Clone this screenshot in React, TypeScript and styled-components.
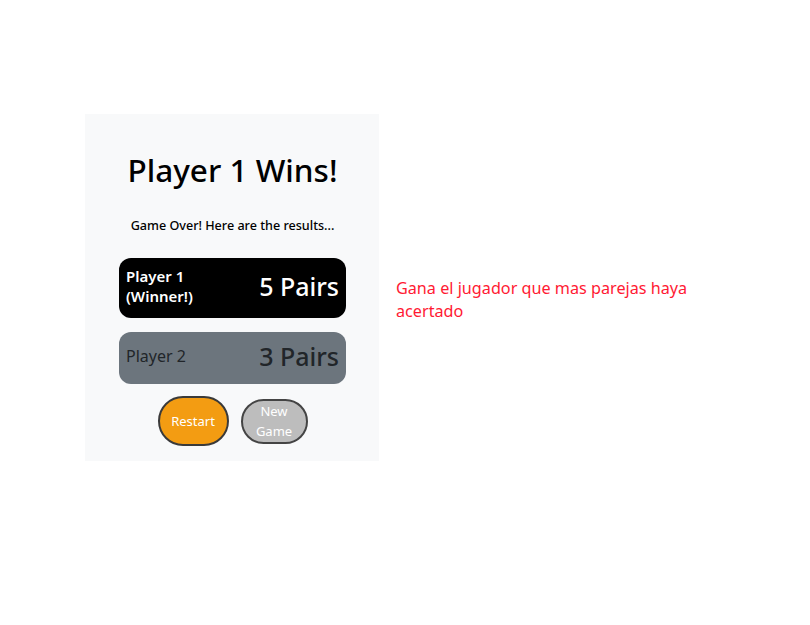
import React from 'react';
import styled, { createGlobalStyle } from 'styled-components';

const GlobalStyle = createGlobalStyle`
	html, body {
		margin: 0;
		padding: 0;
		background: #ffffff;
	}
	body {
		font-family: 'Noto Sans', 'Open Sans', sans-serif;
		color: #212529;
	}
`;

type Player = { name: string; pairs: number; winner?: boolean };

const players: Player[] = [
	{ name: 'Player 1', pairs: 5, winner: true },
	{ name: 'Player 2', pairs: 3 }
];

export default function App() {
	return (
		<>
			<GlobalStyle />
			<Page>
				<Card>
					<Title>Player 1 Wins!</Title>
					<Subtitle>Game Over! Here are the results...</Subtitle>
					<Results>
						{players.map(p => (
							<ResultRow key={p.name} winner={p.winner}>
								<PlayerName winner={p.winner}>
									{p.name}
									{p.winner ? (
										<>
											<br />
											(Winner!)
										</>
									) : null}
								</PlayerName>
								<Pairs>{p.pairs} Pairs</Pairs>
							</ResultRow>
						))}
					</Results>
					<Actions>
						<ActionButton variant="restart">Restart</ActionButton>
						<ActionButton variant="new">
							New
							<br />
							Game
						</ActionButton>
					</Actions>
				</Card>
				<Note>Gana el jugador que mas parejas haya acertado</Note>
			</Page>
		</>
	);
}

const Page = styled.div`
	display: flex;
	align-items: flex-start;
	gap: 17px;
	padding: 114px 0 0 85px;
`;

const Card = styled.div`
	width: 294px;
	box-sizing: border-box;
	background: #f8f9fa;
	padding: 30px 33px 15px 34px;
	display: flex;
	flex-direction: column;
	align-items: stretch;
`;

const Title = styled.h1`
	margin: 0;
	text-align: center;
	font-size: 31.5px;
	font-weight: 500;
	line-height: 52px;
	color: #000;
`;

const Subtitle = styled.p`
	margin: 22px 0 0;
	text-align: center;
	font-size: 12.6px;
	font-weight: 500;
	line-height: 16px;
	color: #000;
`;

const Results = styled.div`
	display: flex;
	flex-direction: column;
	gap: 14px;
	margin-top: 24px;
`;

const ResultRow = styled.div<{ winner?: boolean }>`
	display: flex;
	align-items: center;
	justify-content: space-between;
	height: ${({ winner }) => (winner ? '60px' : '52px')};
	box-sizing: border-box;
	padding: 0 7px 4px;
	border-radius: 12px;
	background: ${({ winner }) => (winner ? '#000000' : '#6c757d')};
	color: ${({ winner }) => (winner ? '#ffffff' : '#212529')};
	font-weight: ${({ winner }) => (winner ? 600 : 400)};
`;

const PlayerName = styled.div<{ winner?: boolean }>`
	font-size: ${({ winner }) => (winner ? '15px' : '16px')};
	line-height: 20px;
`;

const Pairs = styled.div`
	font-size: 25px;
	line-height: 32px;
	font-weight: 500;
`;

const Actions = styled.div`
	display: flex;
	justify-content: center;
	align-items: center;
	gap: 12px;
	margin-top: 12px;
`;

const ActionButton = styled.button<{ variant: 'restart' | 'new' }>`
	font-family: inherit;
	font-size: 13px;
	line-height: 20px;
	color: #ffffff;
	border: 2px solid #333;
	border-radius: 25px;
	padding: 0;
	width: ${({ variant }) => (variant === 'restart' ? '71px' : '67px')};
	height: ${({ variant }) => (variant === 'restart' ? '50px' : '45px')};
	background: ${({ variant }) => (variant === 'restart' ? '#f39c12' : '#bdbdbd')};
	border-color: ${({ variant }) => (variant === 'restart' ? '#3a3a3a' : '#444')};
	cursor: pointer;
`;

const Note = styled.p`
	margin: 163px 0 0;
	width: 310px;
	font-size: 16.2px;
	line-height: 23px;
	color: #ff1a33;
`;
